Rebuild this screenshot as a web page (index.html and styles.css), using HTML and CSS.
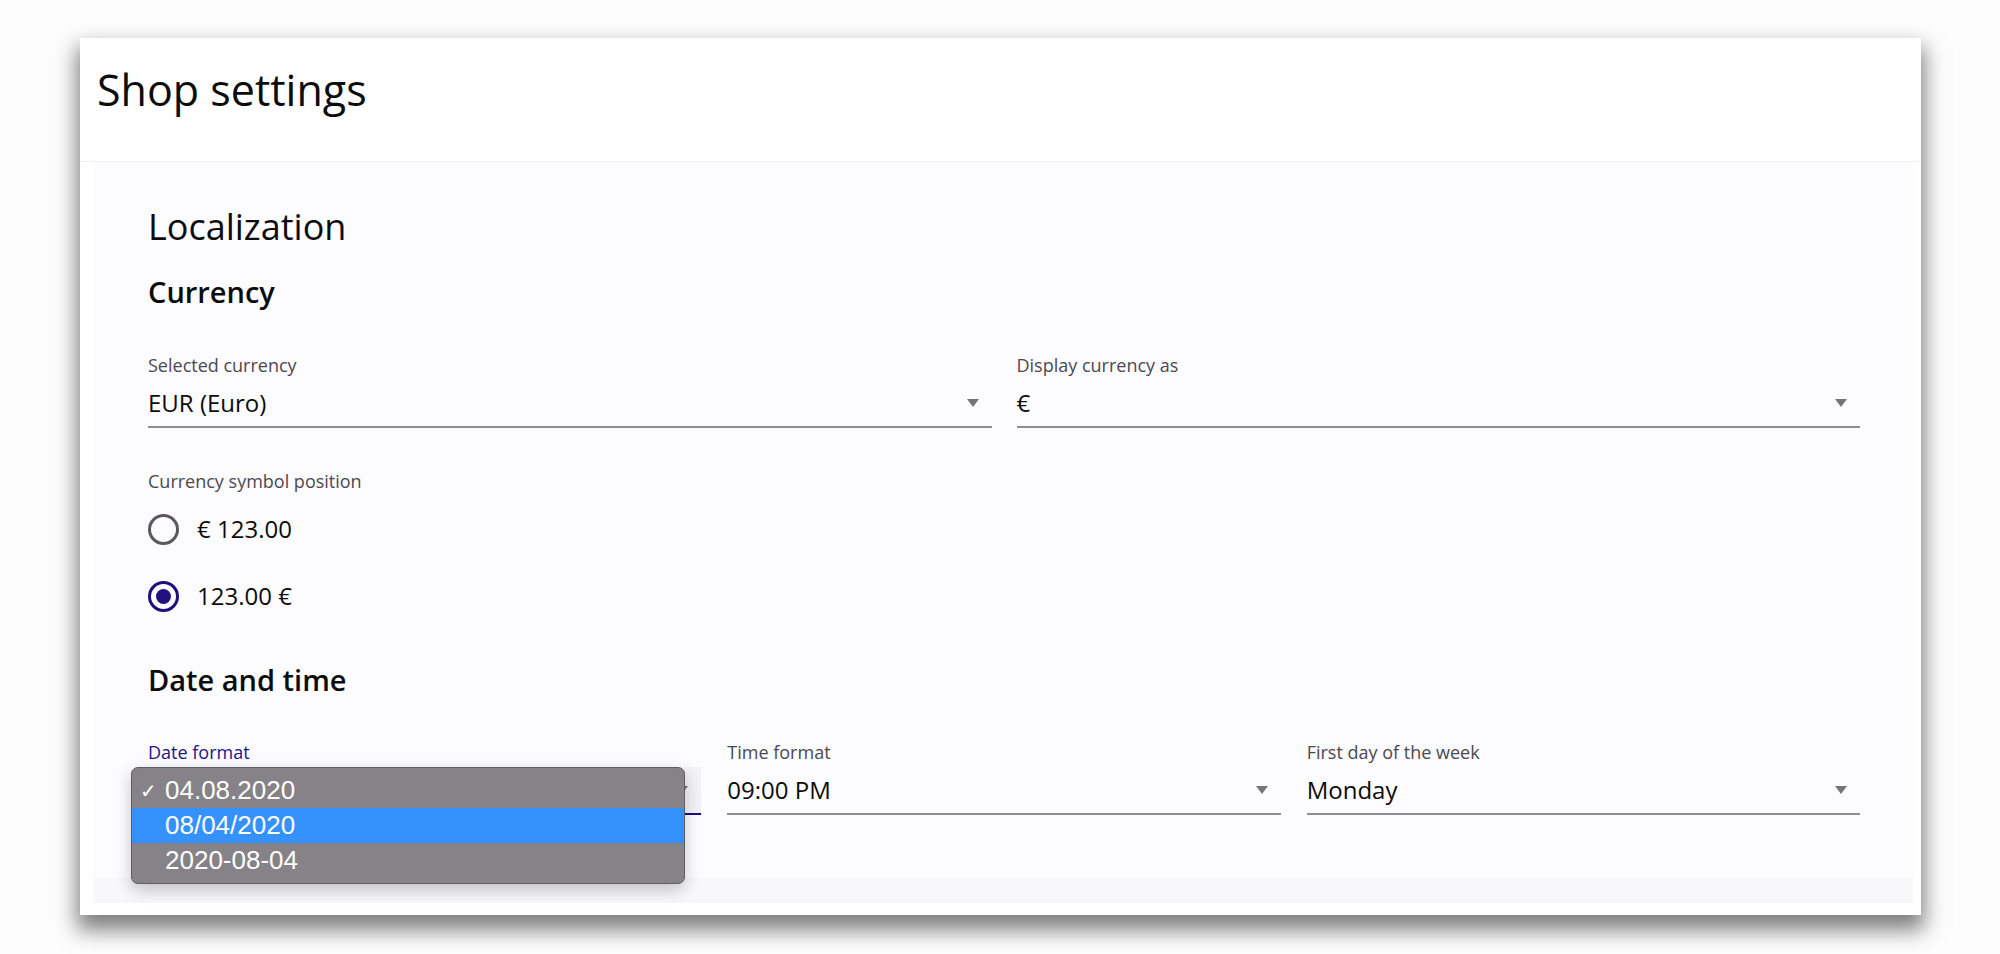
FILE: index.html
```html
<!DOCTYPE html>
<html lang="en">
<head>
    <meta charset="UTF-8">
    <meta name="viewport" content="width=device-width, initial-scale=1.0">
    <title>Shop settings</title>
    <link rel="stylesheet" href="styles.css">
</head>
<body>

<div class="window">

    <header class="page-header">
        <h1>Shop settings</h1>
    </header>

    <main class="panel">
        <h2 class="section-title">Localization</h2>

        <!-- Currency -->
        <h3 class="group-title">Currency</h3>
        <div class="row row-2">
            <div class="field">
                <label class="field-label">Selected currency</label>
                <div class="select-box">
                    <span class="value">EUR (Euro)</span>
                    <span class="caret"></span>
                </div>
            </div>
            <div class="field">
                <label class="field-label">Display currency as</label>
                <div class="select-box">
                    <span class="value">€</span>
                    <span class="caret"></span>
                </div>
            </div>
        </div>

        <p class="field-label radio-title">Currency symbol position</p>
        <div class="radio-list">
            <label class="radio-row">
                <span class="radio"></span>
                <span class="value">€ 123.00</span>
            </label>
            <label class="radio-row">
                <span class="radio checked"></span>
                <span class="value">123.00 €</span>
            </label>
        </div>

        <!-- Date and time -->
        <h3 class="group-title date-title">Date and time</h3>
        <div class="row row-3">
            <div class="field date-field">
                <label class="field-label active">Date format</label>
                <div class="select-box focused">
                    <span class="value">04.08.2020</span>
                    <span class="caret"></span>
                </div>
                <ul class="popup">
                    <li><span class="check">✓</span>04.08.2020</li>
                    <li class="hover"><span class="check"></span>08/04/2020</li>
                    <li><span class="check"></span>2020-08-04</li>
                </ul>
            </div>
            <div class="field">
                <label class="field-label">Time format</label>
                <div class="select-box">
                    <span class="value">09:00 PM</span>
                    <span class="caret"></span>
                </div>
            </div>
            <div class="field">
                <label class="field-label">First day of the week</label>
                <div class="select-box">
                    <span class="value">Monday</span>
                    <span class="caret"></span>
                </div>
            </div>
        </div>
    </main>

    <div class="panel-foot"></div>

</div>

</body>
</html>
```

FILE: styles.css
```css
html {
    background-color: #fefdfe;
}

body {
    font-family: 'Open Sans', 'Liberation Sans', sans-serif;
    color: #0c0c0c;
    margin: 0;
    padding: 38px 79px 39px 80px;
}

.window {
    background-color: #fff;
    padding-bottom: 12px;
    box-shadow: 0 12px 20px 3px rgba(0, 0, 0, 0.5);
}

.page-header {
    height: 93px;
    padding: 30px 0 0 17px;
    border-bottom: 1px solid #efeef1;
}

.page-header h1 {
    margin: 0;
    font-size: 43px;
    line-height: 43px;
    font-weight: 400;
}

.panel {
    margin: 0 8px 0 13px;
    padding: 47px 53px 63px 55px;
    background-color: #fcfbfd;
}

.section-title {
    margin: 0;
    font-size: 36px;
    line-height: 36px;
    font-weight: 400;
}

.group-title {
    margin: 32px 0 0;
    font-size: 29px;
    line-height: 29px;
    font-weight: 600;
}

.date-title {
    margin-top: 45px;
}

.row {
    display: grid;
    margin-top: 50px;
}

.row-2 {
    grid-template-columns: 1fr 1fr;
    column-gap: 25px;
}

.row-3 {
    grid-template-columns: 1fr 1fr 1fr;
    column-gap: 26px;
    margin-top: 49px;
}

.field {
    position: relative;
}

.field-label {
    display: block;
    margin: 0;
    font-size: 18px;
    line-height: 18px;
    color: #4b4951;
}

.field-label.active {
    color: #22148a;
}

.select-box {
    display: flex;
    align-items: center;
    justify-content: space-between;
    margin-top: 6px;
    padding: 11px 13px 11px 0;
    border-bottom: 2px solid #8f8d93;
}

.select-box.focused {
    background-color: #f3f2f5;
    border-bottom-color: #1d0f82;
}

.value {
    font-size: 24px;
    line-height: 24px;
}

.caret {
    width: 0;
    height: 0;
    border-left: 6px solid transparent;
    border-right: 6px solid transparent;
    border-top: 8px solid #76747a;
}

.radio-title {
    margin-top: 44px;
}

.radio-list {
    display: flex;
    flex-direction: column;
    gap: 19px;
    margin-top: 15px;
}

.radio-row {
    display: flex;
    align-items: center;
    gap: 18px;
    height: 48px;
}

.radio {
    box-sizing: border-box;
    width: 31px;
    height: 31px;
    border: 3px solid #5a585e;
    border-radius: 50%;
    display: flex;
    align-items: center;
    justify-content: center;
}

.radio.checked {
    border-color: #1e0e80;
}

.radio.checked::after {
    content: "";
    width: 15px;
    height: 15px;
    border-radius: 50%;
    background-color: #22127f;
}

/* native-looking select menu */
.popup {
    position: absolute;
    top: 24px;
    left: -17px;
    width: 554px;
    box-sizing: border-box;
    margin: 0;
    padding: 5px 0;
    list-style: none;
    background-color: #858388;
    border: 1px solid #605e63;
    border-radius: 7px;
    box-shadow: 0 6px 16px rgba(0, 0, 0, 0.22);
    font-family: 'Liberation Sans', sans-serif;
}

.popup li {
    display: flex;
    align-items: center;
    height: 35px;
    padding-left: 8px;
    font-size: 26px;
    color: #fff;
}

.popup li.hover {
    background-color: #3592fd;
}

.popup .check {
    width: 25px;
    font-size: 20px;
}

.panel-foot {
    height: 25px;
    margin: 0 8px 0 13px;
    background-color: #f8f7fa;
}
```
